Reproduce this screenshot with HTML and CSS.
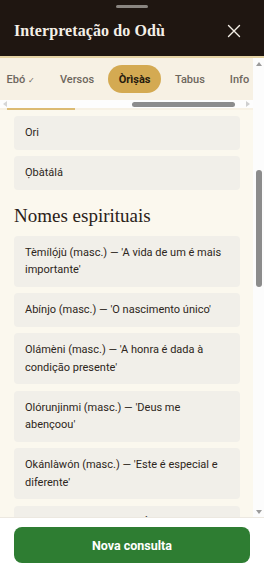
FILE: index.html
```html
<!DOCTYPE html>
<html lang="pt">
<head>
    <meta charset="UTF-8">
    <meta name="viewport" content="width=device-width, initial-scale=1.0">
    <title>Interpretação do Odù</title>
    <link rel="stylesheet" href="styles.css">
</head>
<body>
    <div class="sheet">
        <header class="sheet-header">
            <div class="handle"></div>
            <div class="title-row">
                <h1>Interpretação do Odù</h1>
                <button class="close-btn" aria-label="Fechar">
                    <svg width="14" height="14" viewBox="0 0 14 14">
                        <path d="M1.5 1.5L12.5 12.5M12.5 1.5L1.5 12.5" stroke="#f4efe7" stroke-width="1.4" stroke-linecap="round"/>
                    </svg>
                </button>
            </div>
        </header>

        <div class="body-row">
            <main class="sheet-body" id="sheet-body">
                <div class="tabs-wrap">
                    <nav class="tabs" id="tabs">
                        <button class="tab">Odù</button>
                        <button class="tab">Visão geral</button>
                        <button class="tab">Significado</button>
                        <button class="tab">Conselhos</button>
                        <button class="tab">Ebó <span class="check">✓</span></button>
                        <button class="tab">Versos</button>
                        <button class="tab active">Òrìṣàs</button>
                        <button class="tab">Tabus</button>
                        <button class="tab">Info</button>
                    </nav>
                    <div class="hbar">
                        <span class="arrow">
                            <svg width="4" height="6" viewBox="0 0 4 6"><path d="M0 3L4 0V6z" fill="#d6d6d6"/></svg>
                        </span>
                        <div class="hbar-track" id="h-track"><div class="hbar-thumb" id="h-thumb"></div></div>
                        <span class="arrow">
                            <svg width="4" height="6" viewBox="0 0 4 6"><path d="M0 0L4 3L0 6z" fill="#cfcfcf"/></svg>
                        </span>
                    </div>
                    <div class="progress"><div class="progress-bar" style="width: 68px"></div></div>
                </div>

                <section class="section">
                    <h2>Òrìṣàs que falam</h2>
                    <ul class="items">
                        <li class="item">Èṣù</li>
                        <li class="item">Ògún</li>
                        <li class="item">Ọ̀ṣun</li>
                        <li class="item">Ṣàngó</li>
                        <li class="item">Yemọja</li>
                        <li class="item">Ọya</li>
                        <li class="item">Ọ̀rúnmìlà</li>
                        <li class="item">Ọ̀ṣọ́ọ̀sì</li>
                        <li class="item">Ọbalúayé</li>
                        <li class="item" id="ori">Ori</li>
                        <li class="item">Ọbàtálá</li>
                    </ul>
                </section>

                <section class="section">
                    <h2>Nomes espirituais</h2>
                    <ul class="items">
                        <li class="item">Tèmílọ́jù (masc.) — 'A vida de um é mais importante'</li>
                        <li class="item">Abínjo (masc.) — 'O nascimento único'</li>
                        <li class="item">Olámèni (masc.) — 'A honra é dada à condição presente'</li>
                        <li class="item">Olórunjinmi (masc.) — 'Deus me abençoou'</li>
                        <li class="item">Okánlàwón (masc.) — 'Este é especial e diferente'</li>
                        <li class="item">Oríṣàdé (masc.) — 'Meu Òrìṣà chegou com honra e alegria'</li>
                        <li class="item">Ifáyẹmí (fem.) — 'Ifá me cai bem'</li>
                        <li class="item">Ọmọlará (fem.) — 'A criança é da família e do seu povo'</li>
                        <li class="item">Àṣàbí (fem.) — 'Nascida de linhagem escolhida'</li>
                        <li class="item">Ìbùkún (fem.) — 'Bênção'</li>
                        <li class="item">Ifákẹ́mi (masc.) — 'Ifá cuida de mim em todos os caminhos'</li>
                        <li class="item">Ayọ̀délé (fem.) — 'A alegria chegou em casa'</li>
                        <li class="item">Ifáṣọlá (masc.) — 'Ifá guarda a riqueza da família'</li>
                        <li class="item">Àbẹ̀ní (fem.) — 'Pedimos por ela'</li>
                    </ul>
                </section>

                <section class="section">
                    <h2>Cores e elementos</h2>
                    <ul class="items">
                        <li class="item">Branco — paz e clareza</li>
                        <li class="item">Vermelho — força e movimento</li>
                        <li class="item">Dourado — prosperidade</li>
                        <li class="item">Água fresca — calma do Ori</li>
                        <li class="item">Obì abatà — comunicação com os Òrìṣàs e com os ancestrais</li>
                        <li class="item">Ẹfun — purificação</li>
                        <li class="item">Mel — doçura nos caminhos</li>
                        <li class="item">Ẹ̀kọ — oferenda de equilíbrio</li>
                        <li class="item">Ọ̀rí — proteção e suavidade</li>
                    </ul>
                </section>
            </main>

            <div class="vbar">
                <span class="arrow">
                    <svg width="6" height="4" viewBox="0 0 6 4"><path d="M3 0L6 4H0z" fill="#9b9b9b"/></svg>
                </span>
                <div class="vbar-track" id="v-track"><div class="vbar-thumb" id="v-thumb"></div></div>
                <span class="arrow">
                    <svg width="6" height="4" viewBox="0 0 6 4"><path d="M0 0H6L3 4z" fill="#9b9b9b"/></svg>
                </span>
            </div>
        </div>

        <footer class="sheet-footer">
            <button class="btn-primary">Nova consulta</button>
        </footer>
    </div>

    <script>
        // posição de leitura: aba Òrìṣàs aberta, lista rolada até Ori
        var body = document.getElementById('sheet-body');
        var ori = document.getElementById('ori');
        body.scrollTop += ori.getBoundingClientRect().top - 116;

        var tabs = document.getElementById('tabs');
        var active = tabs.querySelector('.active');
        tabs.scrollLeft += active.getBoundingClientRect().left - 108;

        // barras de rolagem desenhadas
        var vTrack = document.getElementById('v-track');
        var vThumb = document.getElementById('v-thumb');
        var vh = vTrack.clientHeight;
        vThumb.style.marginTop = (vh * body.scrollTop / body.scrollHeight) + 'px';
        vThumb.style.height = (vh * body.clientHeight / body.scrollHeight) + 'px';

        var hTrack = document.getElementById('h-track');
        var hThumb = document.getElementById('h-thumb');
        var hw = hTrack.clientWidth;
        hThumb.style.marginLeft = (hw * tabs.scrollLeft / tabs.scrollWidth) + 'px';
        hThumb.style.width = (hw * tabs.clientWidth / tabs.scrollWidth) + 'px';
    </script>
</body>
</html>
```

FILE: styles.css
```css
* {
    box-sizing: border-box;
}
html, body {
    margin: 0;
    height: 100%;
}
body {
    font-family: 'Roboto', 'Noto Sans', Arial, sans-serif;
    background: #fbf8ee;
    color: #2d2620;
}
.sheet {
    display: flex;
    flex-direction: column;
    height: 100vh;
}

/* cabeçalho */
.sheet-header {
    background: #1f1611;
    height: 58px;
    border-bottom: 2px solid #e4d2a4;
    display: flex;
    flex-direction: column;
    flex-shrink: 0;
}
.handle {
    width: 32px;
    height: 3px;
    border-radius: 2px;
    background: #8a8580;
    margin: 5px auto 0;
}
.title-row {
    flex: 1;
    display: flex;
    align-items: center;
    justify-content: space-between;
    padding: 0 23px 2px 14px;
}
.title-row h1 {
    margin: 0;
    font-family: 'Liberation Serif', 'Times New Roman', serif;
    font-weight: bold;
    font-size: 16px;
    color: #f4efe7;
    letter-spacing: 0.1px;
}
.close-btn {
    background: none;
    border: none;
    padding: 0;
    width: 14px;
    height: 14px;
    cursor: pointer;
}

/* área rolável */
.body-row {
    flex: 1;
    display: flex;
    min-height: 0;
}
.sheet-body {
    flex: 1;
    overflow: hidden;
    background: #fbf8ee;
}
.vbar {
    width: 11px;
    flex-shrink: 0;
    display: flex;
    flex-direction: column;
    background: #fcfcfc;
}
.vbar .arrow {
    height: 11px;
    display: flex;
    align-items: center;
    justify-content: center;
}
.vbar-track {
    flex: 1;
    display: flex;
    flex-direction: column;
    align-items: center;
}
.vbar-thumb {
    width: 6px;
    border-radius: 3px;
    background: #8c8c8c;
}

/* abas */
.tabs-wrap {
    position: sticky;
    top: 0;
    z-index: 1;
    background: #f7f1e4;
}
.tabs {
    display: flex;
    gap: 2px;
    padding: 7px 11px;
    overflow: hidden;
}
.tab {
    flex-shrink: 0;
    height: 28px;
    padding: 0 11.5px;
    border: none;
    border-radius: 14px;
    background: none;
    font-family: 'Roboto', 'Noto Sans', Arial, sans-serif;
    font-size: 11px;
    font-weight: 500;
    color: #6e675d;
    white-space: nowrap;
    cursor: pointer;
}
.tab .check {
    font-size: 8px;
}
.tab.active {
    padding: 0 11px;
    background: #d4aa52;
    color: #261a0e;
    font-weight: 700;
}
.hbar {
    height: 8px;
    display: flex;
    background: #fdfdfd;
}
.hbar .arrow {
    width: 10px;
    display: flex;
    align-items: center;
    justify-content: center;
}
.hbar-track {
    flex: 1;
    display: flex;
    align-items: center;
}
.hbar-thumb {
    height: 5px;
    border-radius: 3px;
    background: #8c8c8c;
}
.progress {
    height: 2px;
    padding-left: 7px;
}
.progress-bar {
    height: 2px;
    background: #dcbb73;
}

/* seções */
.section {
    padding: 0 13px 0 14px;
}
.section h2 {
    margin: 14px 0 8px;
    font-family: 'Liberation Serif', 'Times New Roman', serif;
    font-weight: normal;
    font-size: 19px;
    line-height: 24px;
    color: #2a2118;
}
.items {
    list-style: none;
    margin: 0;
    padding: 0;
    display: flex;
    flex-direction: column;
    gap: 6.5px;
}
.item {
    background: #f1efe9;
    border-radius: 4px;
    padding: 8px 11px;
    font-size: 11px;
    line-height: 17.5px;
    color: #2d2620;
}

/* rodapé */
.sheet-footer {
    flex-shrink: 0;
    background: #ffffff;
    border-top: 1px solid #ece8e0;
    padding: 9px 14px 8px;
}
.btn-primary {
    width: 100%;
    height: 36px;
    border: none;
    border-radius: 8px;
    background: #2e7d32;
    color: #ffffff;
    font-family: 'Roboto', 'Noto Sans', Arial, sans-serif;
    font-size: 12.5px;
    font-weight: 700;
    cursor: pointer;
}
```
